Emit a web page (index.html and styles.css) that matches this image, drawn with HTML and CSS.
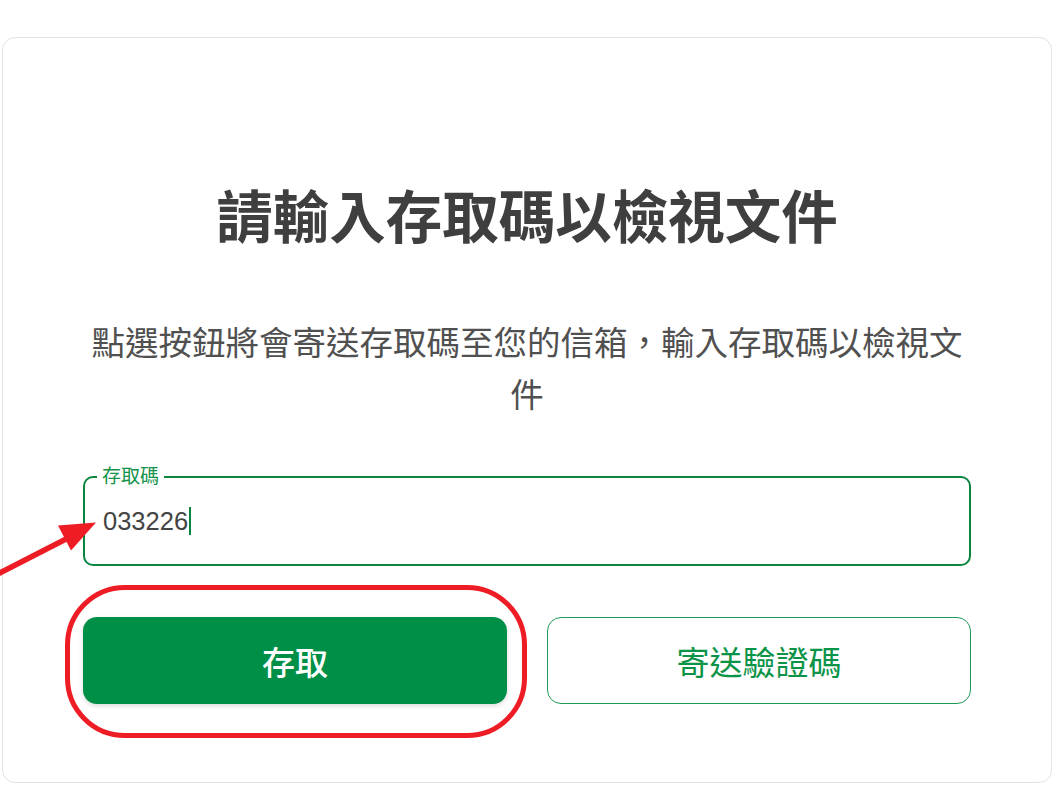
FILE: index.html
```html
<!DOCTYPE html>
<html lang="zh-Hant">
<head>
<meta charset="utf-8">
<title>請輸入存取碼以檢視文件</title>
<link rel="stylesheet" href="styles.css">
</head>
<body>
<div class="page">
  <main class="card">
    <h1 class="title">請輸入存取碼以檢視文件</h1>
    <p class="subtitle">點選按鈕將會寄送存取碼至您的信箱，輸入存取碼以檢視文件</p>
    <div class="field">
      <span class="field-label">存取碼</span>
      <div class="field-input"><span class="value">033226</span><span class="caret"></span></div>
    </div>
    <div class="actions">
      <div class="btn-wrap">
        <button class="btn btn-primary" type="button">存取</button>
        <span class="ring"></span>
      </div>
      <div class="btn-wrap">
        <button class="btn btn-outline" type="button">寄送驗證碼</button>
      </div>
    </div>
  </main>
  <svg class="arrow" width="110" height="90" viewBox="0 500 110 90" aria-hidden="true">
    <line x1="-4" y1="575" x2="68" y2="538" stroke="#ee1d25" stroke-width="5.5"/>
    <polygon points="58,525.5 96,522.5 71,550.5" fill="#ee1d25"/>
  </svg>
</div>
</body>
</html>
```
FILE: styles.css
```css
* { box-sizing: border-box; }
html, body {
  margin: 0;
  padding: 0;
  background: #ffffff;
}
body {
  font-family: "Liberation Sans", "Noto Sans CJK TC", sans-serif;
  color: #444;
}
.page {
  position: relative;
  width: 1060px;
  height: 808px;
  padding: 37px 0 0 2px;
  overflow: hidden;
}
.card {
  width: 1050px;
  height: 746px;
  border: 1px solid #e2e2e2;
  border-radius: 13px;
  padding: 142px 80px 0 80px;
  display: flex;
  flex-direction: column;
}
.title {
  margin: 0;
  font-family: "Noto Sans CJK TC", sans-serif;
  font-size: 56.5px;
  line-height: 67px;
  font-weight: 700;
  text-align: center;
  color: #3f3f3f;
  letter-spacing: 0;
}
.subtitle {
  margin: 68px 0 0 0;
  font-family: "Noto Sans CJK TC", sans-serif;
  font-size: 33.5px;
  line-height: 52px;
  font-weight: 400;
  text-align: center;
  color: #505050;
}
.field {
  position: relative;
  margin-top: 57px;
}
.field-input {
  height: 90px;
  border: 2px solid #0a8540;
  border-radius: 10px;
  padding: 0 18px;
  display: flex;
  align-items: center;
  font-family: "Liberation Sans", sans-serif;
  font-size: 25.5px;
  color: #444;
}
.caret {
  display: inline-block;
  width: 1.5px;
  height: 28px;
  background: #0a8540;
  margin-left: 1px;
}
.field-label {
  position: absolute;
  left: 14px;
  top: -12px;
  padding: 0 5px;
  background: #ffffff;
  font-family: "Noto Sans CJK TC", sans-serif;
  font-size: 19px;
  line-height: 22px;
  color: #13924a;
}
.actions {
  margin-top: 51px;
  display: grid;
  grid-template-columns: 1fr 1fr;
  column-gap: 40px;
}
.btn-wrap {
  position: relative;
}
.btn {
  width: 100%;
  height: 87px;
  border-radius: 14px;
  font-family: "Noto Sans CJK TC", sans-serif;
  font-size: 33px;
  font-weight: 500;
  cursor: pointer;
  display: flex;
  align-items: center;
  justify-content: center;
}
.btn-primary {
  background: #008f46;
  color: #ffffff;
  border: none;
  box-shadow: 0 2px 5px rgba(0, 0, 0, 0.14);
}
.btn-outline {
  background: #ffffff;
  color: #0b9448;
  border: 1.5px solid #1d9a55;
  font-weight: 400;
}
.ring {
  position: absolute;
  top: -32px;
  left: -18px;
  right: -20px;
  bottom: -34px;
  border: 5.5px solid #ee1d25;
  border-radius: 60px;
  pointer-events: none;
}
.arrow {
  position: absolute;
  left: 0;
  top: 500px;
}
```
